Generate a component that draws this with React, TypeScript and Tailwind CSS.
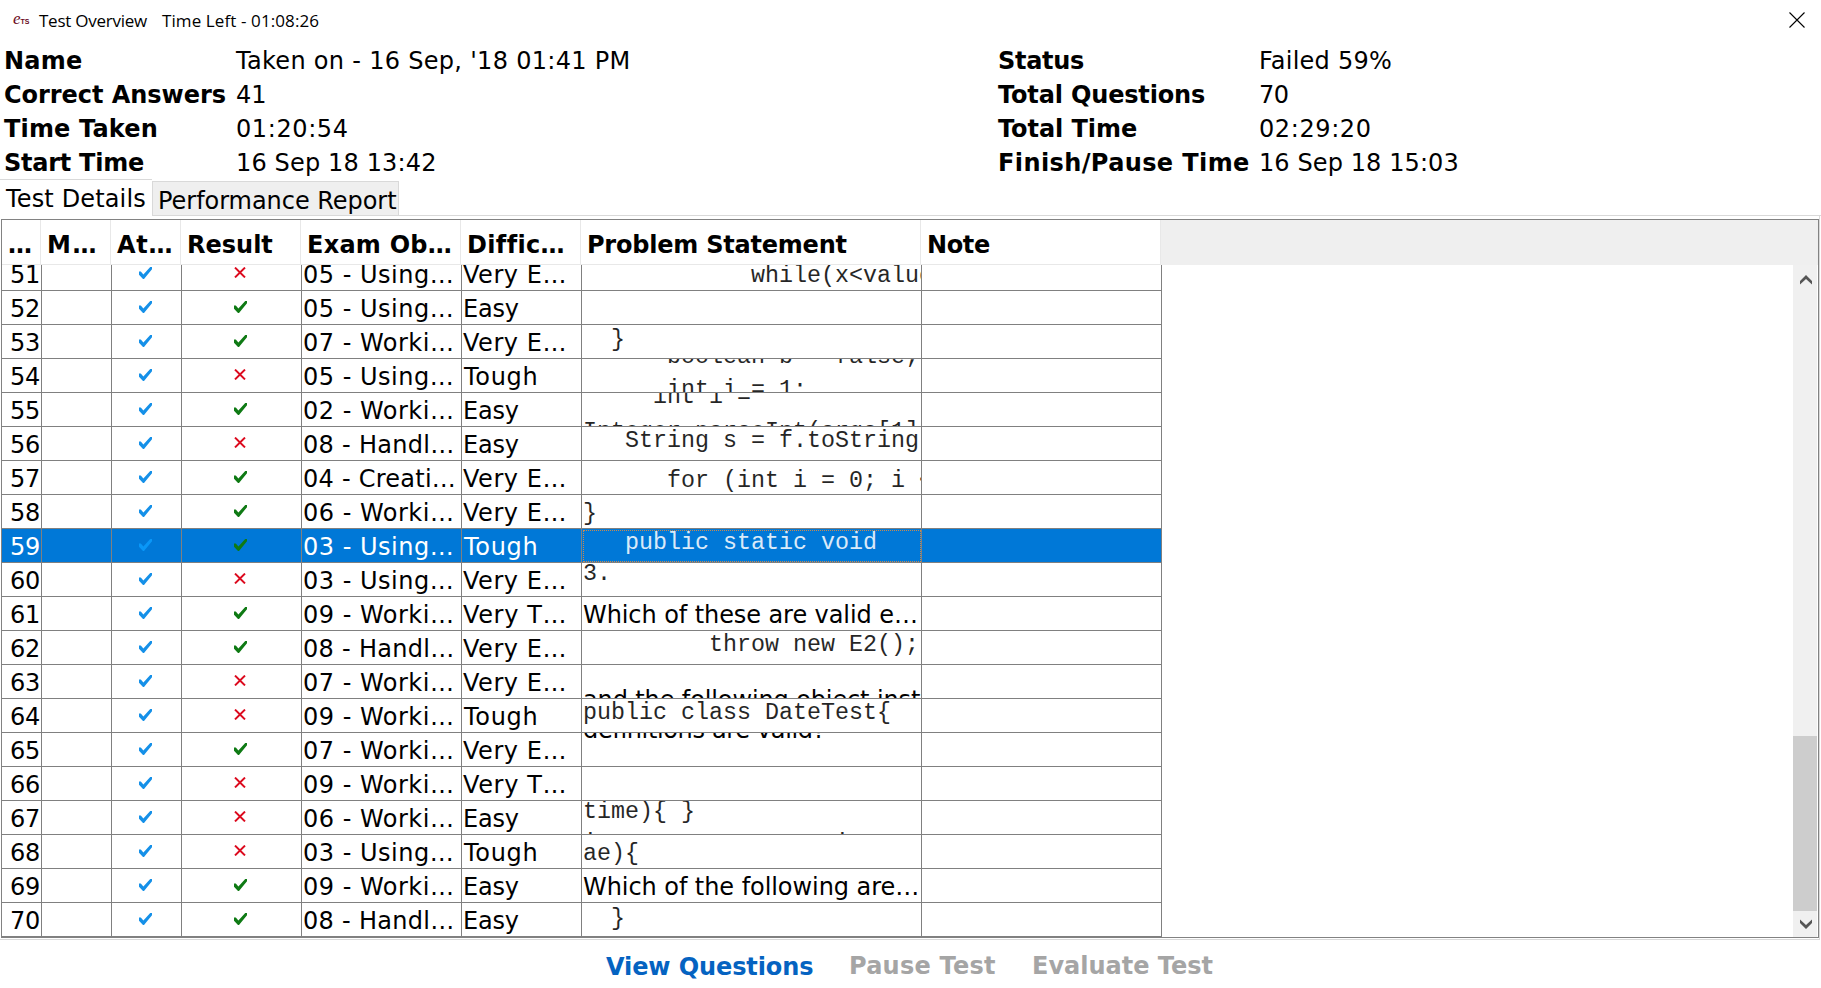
import React from "react";

type CodeLine = { text: string; cls: string; plain?: boolean };
type Row = {
  no: number;
  ok: boolean;
  objective: string;
  level: string;
  statement?: string;
  statementCls?: string;
  lines?: CodeLine[];
};

const summary: [string, string, string, string][][] = [
  [
    ["Name", "tracking-[0.24px]", "Taken on - 16 Sep, '18 01:41 PM", "tracking-[0.3px]"],
    ["Correct Answers", "tracking-[-0.04px]", "41", ""],
    ["Time Taken", "tracking-[0.15px]", "01:20:54", "tracking-[0.6px]"],
    ["Start Time", "tracking-[-0.25px]", "16 Sep 18 13:42", "tracking-[0.15px]"],
  ],
  [
    ["Status", "tracking-[-0.3px]", "Failed 59%", "tracking-[0.24px]"],
    ["Total Questions", "tracking-[-0.16px]", "70", "tracking-[-0.4px]"],
    ["Total Time", "tracking-[-0.06px]", "02:29:20", "tracking-[0.6px]"],
    ["Finish/Pause Time", "tracking-[0.39px]", "16 Sep 18 15:03", "tracking-[0.1px]"],
  ],
];

const headers: [string, string][] = [
  ["…", "w-[39px] pl-[6px] tracking-[1px]"],
  ["M…", "w-[70px] pl-[6px] tracking-[1.6px]"],
  ["At…", "w-[70px] pl-[6px] tracking-[0.7px]"],
  ["Result", "w-[120px] pl-[6px]"],
  ["Exam Ob…", "w-[160px] pl-[6px] tracking-[0.25px]"],
  ["Diffic…", "w-[120px] pl-[6px] tracking-[0.35px]"],
  ["Problem Statement", "w-[340px] pl-[6px] tracking-[-0.22px]"],
  ["Note", "w-[240px] pl-[6px] tracking-[-0.35px]"],
];

const objectiveTracking: Record<string, string> = {
  Using: "tracking-[0.5px]",
  Worki: "tracking-[0.5px]",
  Handl: "tracking-[0.3px]",
  Creati: "tracking-[0.25px]",
};

const levelTracking: Record<string, string> = {
  "Very E…": "pl-px tracking-[0.55px]",
  "Very T…": "pl-px tracking-[0.65px]",
  Easy: "pl-[1px] tracking-[-0.2px]",
  Tough: "pl-[2px] tracking-[0.7px]",
};

const rows: Row[] = [
  { no: 51, ok: false, objective: "05 - Using…", level: "Very E…", lines: [{ text: "            while(x<value)", cls: "mt-[6px]" }] },
  { no: 52, ok: true, objective: "05 - Using…", level: "Easy" },
  { no: 53, ok: true, objective: "07 - Worki…", level: "Very E…", lines: [{ text: "  }", cls: "mt-[2px]" }] },
  {
    no: 54, ok: false, objective: "05 - Using…", level: "Tough",
    lines: [{ text: "      boolean b = false;", cls: "mt-[-15px]" }, { text: "      int i = 1;", cls: "mt-[7px]" }],
  },
  {
    no: 55, ok: true, objective: "02 - Worki…", level: "Easy",
    lines: [{ text: "     int i =", cls: "mt-[-9px]" }, { text: "Integer.parseInt(args[1]);", cls: "mt-[9px]" }],
  },
  { no: 56, ok: false, objective: "08 - Handl…", level: "Easy", lines: [{ text: "   String s = f.toString", cls: "mt-[1px]" }] },
  { no: 57, ok: true, objective: "04 - Creati…", level: "Very E…", lines: [{ text: "      for (int i = 0; i <", cls: "mt-[7px]" }] },
  { no: 58, ok: true, objective: "06 - Worki…", level: "Very E…", lines: [{ text: "}", cls: "mt-[6px]" }] },
  { no: 59, ok: true, objective: "03 - Using…", level: "Tough", lines: [{ text: "   public static void", cls: "mt-[1px]" }] },
  { no: 60, ok: false, objective: "03 - Using…", level: "Very E…", lines: [{ text: "3.", cls: "mt-[-2px]" }] },
  { no: 61, ok: true, objective: "09 - Worki…", level: "Very T…", statement: "Which of these are valid e…", statementCls: "tracking-[-0.08px]" },
  { no: 62, ok: true, objective: "08 - Handl…", level: "Very E…", lines: [{ text: "         throw new E2();", cls: "mt-[1px]" }] },
  { no: 63, ok: false, objective: "07 - Worki…", level: "Very E…", lines: [{ text: "and the following object inst", cls: "mt-[21px] tracking-[-0.12px]", plain: true }] },
  { no: 64, ok: false, objective: "09 - Worki…", level: "Tough", lines: [{ text: "public class DateTest{", cls: "mt-[1px]" }] },
  { no: 65, ok: true, objective: "07 - Worki…", level: "Very E…", lines: [{ text: "definitions are valid?", cls: "mt-[-17px] tracking-[-0.35px]", plain: true }] },
  { no: 66, ok: false, objective: "09 - Worki…", level: "Very T…" },
  {
    no: 67, ok: false, objective: "06 - Worki…", level: "Easy",
    lines: [{ text: "time){ }", cls: "mt-[-2px]" }, { text: "i                 i", cls: "mt-[6px]" }],
  },
  { no: 68, ok: false, objective: "03 - Using…", level: "Tough", lines: [{ text: "ae){", cls: "mt-[6px]" }] },
  { no: 69, ok: true, objective: "09 - Worki…", level: "Easy", statement: "Which of the following are…", statementCls: "tracking-[-0.06px]" },
  { no: 70, ok: true, objective: "08 - Handl…", level: "Easy", lines: [{ text: "  }", cls: "mt-[3px]" }] },
];

const SELECTED = 59;

function Check({ className }: { className: string }) {
  return (
    <svg viewBox="0 0 13 12" className={`block h-[12px] w-[13px] ${className}`} fill="currentColor">
      <path d="M0 4.6h1.8l2.6 2.9L11.2 0H13v2.2L5 12H4L0 7.8z" />
    </svg>
  );
}

function Cross() {
  return (
    <svg viewBox="0 0 12 11" className="block h-[11px] w-[12px] text-[#dc0a1e]" fill="none" stroke="currentColor" strokeWidth="2">
      <path d="M1 .6l10 9.8M11 .6L1 10.4" />
    </svg>
  );
}

function Statement({ row }: { row: Row }) {
  if (row.statement) return <div className={`pl-px pt-[4px] leading-[28px] ${row.statementCls}`}>{row.statement}</div>;
  return (
    <>
      {row.lines?.map((l) => (
        <div
          key={l.text}
          className={
            l.plain
              ? `pl-px leading-[28px] ${l.cls}`
              : `pl-[1px] font-['Liberation_Mono',monospace] text-[23.33px] leading-[26px] opacity-85 ${l.cls}`
          }
        >
          {l.text}
        </div>
      ))}
    </>
  );
}

function TableRow({ row }: { row: Row }) {
  const sel = row.no === SELECTED;
  const cell = "h-[34px] shrink-0 overflow-hidden whitespace-pre border-r border-b border-[#808080]";
  const key = row.objective.slice(5).replace("…", "");
  return (
    <div className={`flex w-[1160px] ${sel ? "bg-[#0078d7] text-white" : "bg-white text-black"}`}>
      <div className={`${cell} w-[40px] pr-px pt-[4px] text-right leading-[28px] tracking-[-0.3px]`}>{row.no}</div>
      <div className={`${cell} w-[70px]`} />
      <div className={`${cell} w-[70px] pl-[27px] pt-[10px]`}>
        <Check className={sel ? "text-[#0a97f7]" : "text-[#1590e8]"} />
      </div>
      <div className={`${cell} w-[120px] pl-[52px] pt-[10px]`}>{row.ok ? <Check className="text-[#0f7a14]" /> : <Cross />}</div>
      <div className={`${cell} w-[160px] pl-px pt-[4px] leading-[28px] ${objectiveTracking[key]}`}>{row.objective}</div>
      <div className={`${cell} w-[120px] pt-[4px] leading-[28px] ${levelTracking[row.level]}`}>{row.level}</div>
      <div className={`${cell} w-[340px] ${sel ? "outline-dotted outline-1 -outline-offset-2 outline-[#c98a4f]" : ""}`}>
        <Statement row={row} />
      </div>
      <div className={`${cell} w-[240px]`} />
    </div>
  );
}

export default function App() {
  return (
    <div className="flex h-[988px] w-[1821px] flex-col overflow-hidden bg-white font-['DejaVu_Sans',sans-serif] text-[24px] text-black">
      <div className="flex h-[43px] shrink-0 items-start font-['Open_Sans',sans-serif] text-[17px] leading-[24px]">
        <div className="flex h-[24px] w-[39px] items-baseline pl-[13px] text-[#6a0a1c]">
          <span className="font-['Liberation_Serif',serif] text-[17px] italic leading-[38px]">e</span>
          <span className="font-['Liberation_Sans',sans-serif] text-[7px] font-bold">TS</span>
        </div>
        <span className="w-[123px] pt-[9px] tracking-[-0.25px]">Test Overview</span>
        <span className="pt-[9px] tracking-[0.1px]">Time Left - 01:08:26</span>
        <svg viewBox="0 0 16 16" className="ml-auto mr-[16px] mt-[12px] h-[16px] w-[16px]" stroke="#000" strokeWidth="1.1">
          <path d="M.5.5l15 15M15.5.5l-15 15" />
        </svg>
      </div>

      <div className="flex h-[136px] shrink-0 pl-[4px] pt-px leading-[34px]">
        <div className="w-[993px]">
          {summary[0].map(([k, kc, v, vc]) => (
            <div key={k} className="flex whitespace-pre">
              <span className={`w-[232px] font-bold ${kc}`}>{k}</span>
              <span className={vc}>{v}</span>
            </div>
          ))}
        </div>
        <div>
          {summary[1].map(([k, kc, v, vc]) => (
            <div key={k} className="flex whitespace-pre">
              <span className={`w-[262px] pl-px font-bold ${kc}`}>{k}</span>
              <span className={vc}>{v}</span>
            </div>
          ))}
        </div>
      </div>

      <div className="flex h-[37px] shrink-0 items-end leading-[28px]">
        <div className="h-[37px] w-[152px] whitespace-pre border-t border-[#d9d9d9] pl-[6px] pt-[5px] tracking-[0.15px]">Test Details</div>
        <div className="h-[35px] w-[247px] whitespace-pre border border-[#d9d9d9] bg-[#efefef] pl-[5px] pt-[5px] leading-[28px] tracking-[-0.04px]">Performance Report</div>
        <div className="h-[37px] flex-1 border-b border-[#d9d9d9]" />
      </div>

      <div className="h-[724px] w-[1820px] shrink-0 border-b border-r border-[#d9d9d9] pl-px pt-[3px]">
        <div className="flex h-[719px] w-[1818px] flex-col border border-[#828282]">
          <div className="flex h-[45px] shrink-0 bg-[#efefef] font-bold leading-[28px]">
            {headers.map(([h, c]) => (
              <div key={h} className={`h-[45px] shrink-0 whitespace-pre border-b border-r border-[#e8e8e8] bg-white pt-[11px] ${c}`}>
                {h}
              </div>
            ))}
          </div>
          <div className="flex h-[672px] overflow-hidden">
            <div className="w-[1791px] overflow-hidden">
              <div className="mt-[-8px]">
                {rows.map((r) => (
                  <TableRow key={r.no} row={r} />
                ))}
              </div>
            </div>
            <div className="flex h-[672px] w-[24px] flex-col bg-[#f0f0f0] text-[#555]">
              <div className="h-[26px] pl-[7px] pt-[10px]">
                <svg viewBox="0 0 12 10" className="block h-[10px] w-[12px]" fill="currentColor">
                  <path d="M6 0l6 6v3.4L6 3.9 0 9.4V6z" />
                </svg>
              </div>
              <div className="mt-auto h-[175px] bg-[#cdcdcd]" />
              <div className="h-[26px] pl-[7px] pt-[8px]">
                <svg viewBox="0 0 12 10" className="block h-[10px] w-[12px]" fill="currentColor">
                  <path d="M6 10l6-6V.6L6 6.1 0 .6V4z" />
                </svg>
              </div>
            </div>
          </div>
        </div>
      </div>

      <div className="flex whitespace-pre pl-[606px] font-bold leading-[28px] text-[#a5a5a5]">
        <span className="w-[243px] pt-[13px] tracking-[-0.1px] text-[#0563c1]">View Questions</span>
        <span className="w-[183px] pt-[12px] tracking-[0.23px]">Pause Test</span>
        <span className="pt-[12px]">Evaluate Test</span>
      </div>
    </div>
  );
}
